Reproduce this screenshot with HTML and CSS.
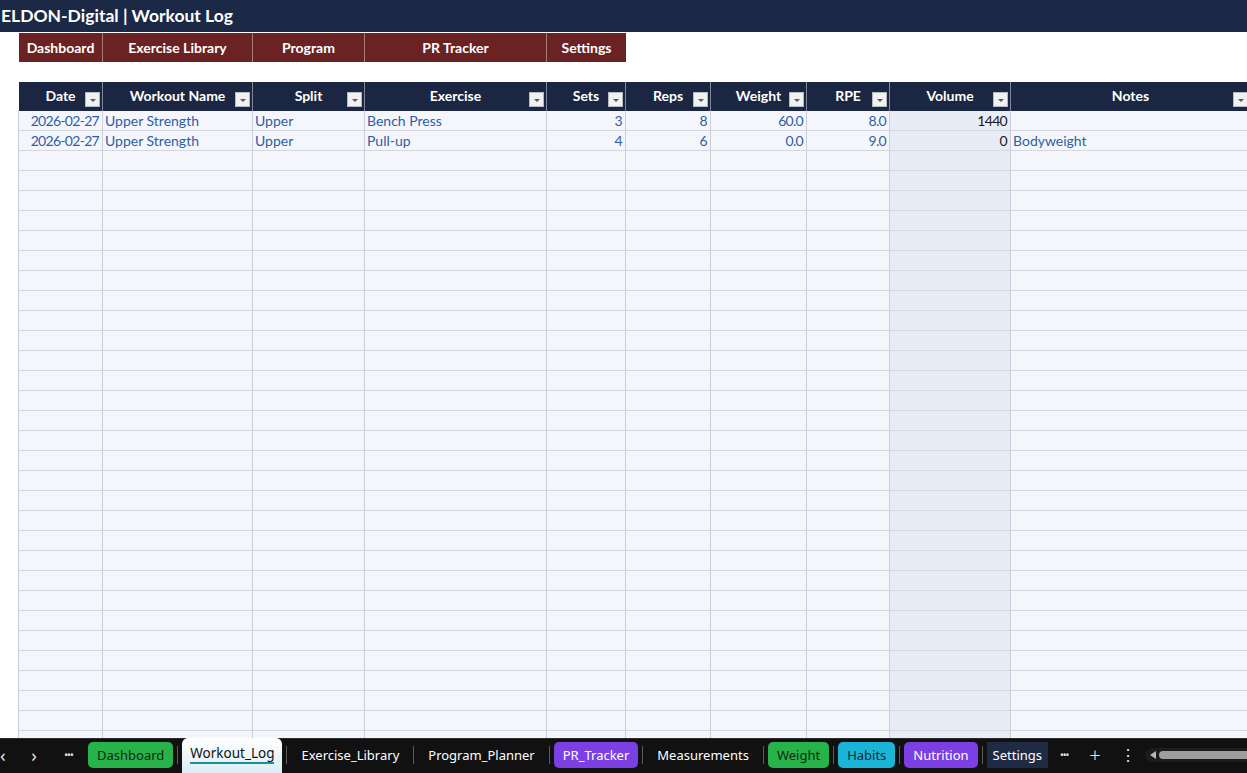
FILE: index.html
```html
<!DOCTYPE html>
<html>
<head>
<meta charset="utf-8">
<link rel="stylesheet" href="styles.css">
</head>
<body>
<div class="sheet">
  <div class="title">ELDON-Digital | Workout Log</div>
  <div class="row nav">
    <span class="gap"></span>
    <span class="btn">Dashboard</span>
    <span class="btn">Exercise Library</span>
    <span class="btn">Program</span>
    <span class="btn">PR Tracker</span>
    <span class="btn">Settings</span>
  </div>
  <div class="spacer"></div>
  <div class="row head">
    <span class="gap"></span>
    <span class="h">Date<i class="dd"></i></span>
    <span class="h">Workout Name<i class="dd"></i></span>
    <span class="h">Split<i class="dd"></i></span>
    <span class="h">Exercise<i class="dd"></i></span>
    <span class="h">Sets<i class="dd"></i></span>
    <span class="h">Reps<i class="dd"></i></span>
    <span class="h">Weight<i class="dd"></i></span>
    <span class="h">RPE<i class="dd"></i></span>
    <span class="h">Volume<i class="dd"></i></span>
    <span class="h">Notes<i class="dd"></i></span>
  </div>
  <div class="body">
    <div class="row data"><span class="gap"></span><span class="r">2026-02-27</span><span>Upper Strength</span><span>Upper</span><span>Bench Press</span><span class="r">3</span><span class="r">8</span><span class="r">60.0</span><span class="r">8.0</span><span class="r vol">1440</span><span></span></div>
    <div class="row data"><span class="gap"></span><span class="r">2026-02-27</span><span>Upper Strength</span><span>Upper</span><span>Pull-up</span><span class="r">4</span><span class="r">6</span><span class="r">0.0</span><span class="r">9.0</span><span class="r vol">0</span><span>Bodyweight</span></div>
    <div class="row data"><span class="gap"></span><span></span><span></span><span></span><span></span><span></span><span></span><span></span><span></span><span class="vol"></span><span></span></div>
    <div class="row data"><span class="gap"></span><span></span><span></span><span></span><span></span><span></span><span></span><span></span><span></span><span class="vol"></span><span></span></div>
    <div class="row data"><span class="gap"></span><span></span><span></span><span></span><span></span><span></span><span></span><span></span><span></span><span class="vol"></span><span></span></div>
    <div class="row data"><span class="gap"></span><span></span><span></span><span></span><span></span><span></span><span></span><span></span><span></span><span class="vol"></span><span></span></div>
    <div class="row data"><span class="gap"></span><span></span><span></span><span></span><span></span><span></span><span></span><span></span><span></span><span class="vol"></span><span></span></div>
    <div class="row data"><span class="gap"></span><span></span><span></span><span></span><span></span><span></span><span></span><span></span><span></span><span class="vol"></span><span></span></div>
    <div class="row data"><span class="gap"></span><span></span><span></span><span></span><span></span><span></span><span></span><span></span><span></span><span class="vol"></span><span></span></div>
    <div class="row data"><span class="gap"></span><span></span><span></span><span></span><span></span><span></span><span></span><span></span><span></span><span class="vol"></span><span></span></div>
    <div class="row data"><span class="gap"></span><span></span><span></span><span></span><span></span><span></span><span></span><span></span><span></span><span class="vol"></span><span></span></div>
    <div class="row data"><span class="gap"></span><span></span><span></span><span></span><span></span><span></span><span></span><span></span><span></span><span class="vol"></span><span></span></div>
    <div class="row data"><span class="gap"></span><span></span><span></span><span></span><span></span><span></span><span></span><span></span><span></span><span class="vol"></span><span></span></div>
    <div class="row data"><span class="gap"></span><span></span><span></span><span></span><span></span><span></span><span></span><span></span><span></span><span class="vol"></span><span></span></div>
    <div class="row data"><span class="gap"></span><span></span><span></span><span></span><span></span><span></span><span></span><span></span><span></span><span class="vol"></span><span></span></div>
    <div class="row data"><span class="gap"></span><span></span><span></span><span></span><span></span><span></span><span></span><span></span><span></span><span class="vol"></span><span></span></div>
    <div class="row data"><span class="gap"></span><span></span><span></span><span></span><span></span><span></span><span></span><span></span><span></span><span class="vol"></span><span></span></div>
    <div class="row data"><span class="gap"></span><span></span><span></span><span></span><span></span><span></span><span></span><span></span><span></span><span class="vol"></span><span></span></div>
    <div class="row data"><span class="gap"></span><span></span><span></span><span></span><span></span><span></span><span></span><span></span><span></span><span class="vol"></span><span></span></div>
    <div class="row data"><span class="gap"></span><span></span><span></span><span></span><span></span><span></span><span></span><span></span><span></span><span class="vol"></span><span></span></div>
    <div class="row data"><span class="gap"></span><span></span><span></span><span></span><span></span><span></span><span></span><span></span><span></span><span class="vol"></span><span></span></div>
    <div class="row data"><span class="gap"></span><span></span><span></span><span></span><span></span><span></span><span></span><span></span><span></span><span class="vol"></span><span></span></div>
    <div class="row data"><span class="gap"></span><span></span><span></span><span></span><span></span><span></span><span></span><span></span><span></span><span class="vol"></span><span></span></div>
    <div class="row data"><span class="gap"></span><span></span><span></span><span></span><span></span><span></span><span></span><span></span><span></span><span class="vol"></span><span></span></div>
    <div class="row data"><span class="gap"></span><span></span><span></span><span></span><span></span><span></span><span></span><span></span><span></span><span class="vol"></span><span></span></div>
    <div class="row data"><span class="gap"></span><span></span><span></span><span></span><span></span><span></span><span></span><span></span><span></span><span class="vol"></span><span></span></div>
    <div class="row data"><span class="gap"></span><span></span><span></span><span></span><span></span><span></span><span></span><span></span><span></span><span class="vol"></span><span></span></div>
    <div class="row data"><span class="gap"></span><span></span><span></span><span></span><span></span><span></span><span></span><span></span><span></span><span class="vol"></span><span></span></div>
    <div class="row data"><span class="gap"></span><span></span><span></span><span></span><span></span><span></span><span></span><span></span><span></span><span class="vol"></span><span></span></div>
    <div class="row data"><span class="gap"></span><span></span><span></span><span></span><span></span><span></span><span></span><span></span><span></span><span class="vol"></span><span></span></div>
    <div class="row data"><span class="gap"></span><span></span><span></span><span></span><span></span><span></span><span></span><span></span><span></span><span class="vol"></span><span></span></div>
    <div class="row data"><span class="gap"></span><span></span><span></span><span></span><span></span><span></span><span></span><span></span><span></span><span class="vol"></span><span></span></div>
  </div>
  <div class="tabbar">
    <span class="ctl first">&lsaquo;</span>
    <span class="ctl">&rsaquo;</span>
    <span class="ctl dots">&bull;&bull;&bull;</span>
    <span class="tab pill green">Dashboard</span>
    <span class="sep"></span>
    <span class="tab active">Workout_Log</span>
    <span class="sep"></span>
    <span class="tab plain">Exercise_Library</span>
    <span class="sep"></span>
    <span class="tab plain">Program_Planner</span>
    <span class="sep"></span>
    <span class="tab pill purple">PR_Tracker</span>
    <span class="sep"></span>
    <span class="tab plain">Measurements</span>
    <span class="sep"></span>
    <span class="tab pill green">Weight</span>
    <span class="sep"></span>
    <span class="tab pill cyan">Habits</span>
    <span class="sep"></span>
    <span class="tab pill purple">Nutrition</span>
    <span class="sep"></span>
    <span class="tab navy">Settings</span>
    <span class="ctl dots more">&bull;&bull;&bull;</span>
    <span class="ctl plus">+</span>
    <span class="ctl kebab">&#8942;</span>
    <span class="scroll"><span class="arrow"></span><span class="thumb"></span></span>
  </div>
</div>
</body>
</html>
```

FILE: styles.css
```css
html, body {
  margin: 0;
  padding: 0;
  background: #ffffff;
}
.sheet {
  width: 1247px;
  height: 773px;
  overflow: hidden;
  display: flex;
  flex-direction: column;
  font-family: Lato, "Liberation Sans", sans-serif;
}
.title {
  height: 32px;
  flex: none;
  background: #1b2947;
  color: #ffffff;
  font-weight: 700;
  font-size: 17.5px;
  line-height: 32px;
  padding-left: 1px;
  white-space: nowrap;
}
.row {
  display: grid;
  grid-template-columns: 19px 84px 150px 112px 182px 79px 85px 96px 83px 121px 240px;
  flex: none;
}
.row > span {
  box-sizing: border-box;
  overflow: hidden;
  white-space: nowrap;
}
.nav {
  height: 29px;
  margin-top: 1px;
}
.nav .btn {
  background: #6b2222;
  color: #ffffff;
  font-weight: 700;
  font-size: 14px;
  line-height: 29px;
  text-align: center;
  border-right: 1px solid #a87a7a;
}
.nav .btn:last-child {
  border-right: none;
}
.spacer {
  height: 20px;
  flex: none;
}
.head {
  height: 29px;
}
.head .h {
  position: relative;
  background: #1b2742;
  color: #ffffff;
  font-weight: 700;
  font-size: 14px;
  line-height: 28px;
  text-align: center;
  border-right: 1px solid #7f889b;
}
.head .gap {
  background: #ffffff;
}
.dd {
  position: absolute;
  right: 2px;
  top: 10px;
  width: 15px;
  height: 15px;
  box-sizing: border-box;
  background: #f1f1f1;
  border: 1px solid #b4b8c0;
}
.dd::after {
  content: "";
  position: absolute;
  left: 4px;
  top: 6px;
  border-left: 3px solid transparent;
  border-right: 3px solid transparent;
  border-top: 3px solid #555a63;
}
.body {
  flex: 1;
  overflow: hidden;
}
.data {
  height: 20px;
}
.data > span {
  background: #f4f6fb;
  border-right: 1px solid #c9ced8;
  border-bottom: 1px solid #d3d7df;
  color: #2d5ea6;
  font-size: 14px;
  line-height: 20px;
  padding: 0 2px;
}
.data > span.gap {
  background: #ffffff;
  border-right: 1px solid #c9ced8;
  border-bottom: none;
}
.data > span.r {
  text-align: right;
  padding-right: 3px;
  letter-spacing: -0.7px;
}
.data > span.vol {
  background: #e7ecf6;
  color: #1a1a1a;
}
.tabbar {
  height: 35px;
  flex: none;
  box-sizing: border-box;
  padding-bottom: 3px;
  background: #111111;
  border-top: 1px solid #2a2a2a;
  display: flex;
  align-items: center;
  font-family: "Noto Sans", "Open Sans", sans-serif;
  font-size: 13px;
  color: #ffffff;
}
.ctl {
  color: #e6e6e6;
  font-size: 18px;
  width: 32px;
  text-align: center;
  flex: none;
  line-height: 30px;
}
.ctl.first {
  width: 18px;
  text-align: left;
}
.ctl.dots {
  font-size: 10px;
  letter-spacing: -1px;
  width: 37px;
}
.tab {
  flex: none;
  padding: 0 9px;
  height: 26px;
  line-height: 26px;
  margin: 0 1px;
  white-space: nowrap;
}
.tab.plain {
  padding: 0 10px;
}
.pill {
  border-radius: 5px;
}
.green {
  background: #27b24a;
  color: #0c2a12;
}
.purple {
  background: #7b3fe4;
  color: #ffffff;
}
.cyan {
  background: #1ab4d6;
  color: #0d2a38;
}
.navy {
  background: #1f2a44;
  color: #ffffff;
  padding: 0 6px;
}
.active {
  height: 35px;
  line-height: 30px;
  align-self: flex-start;
  margin-top: -1px;
  font-size: 13.5px;
  background: linear-gradient(#ffffff, #dcedf6);
  color: #111111;
  border-radius: 6px 6px 0 0;
  padding: 0 8px;
  position: relative;
}
.active::after {
  content: "";
  position: absolute;
  left: 8px;
  right: 8px;
  bottom: 9px;
  height: 2px;
  background: #1d8f95;
}
.sep {
  flex: none;
  width: 1px;
  height: 18px;
  background: #5a5a5a;
  margin: 0 3px;
}
.ctl.more {
  width: 30px;
}
.plus {
  font-size: 20px;
  font-weight: 300;
  width: 32px;
}
.kebab {
  font-size: 16px;
  width: 33px;
}
.scroll {
  flex: 1;
  height: 14px;
  margin-left: 1px;
  background: #1c1c1c;
  border-radius: 7px 0 0 7px;
  display: flex;
  align-items: center;
  padding-left: 5px;
}
.arrow {
  width: 0;
  height: 0;
  border-top: 4px solid transparent;
  border-bottom: 4px solid transparent;
  border-right: 6px solid #b8b8b8;
  margin-right: 3px;
}
.thumb {
  flex: 1;
  height: 8px;
  background: #9d9d9d;
  border-radius: 4px 0 0 4px;
}
```
